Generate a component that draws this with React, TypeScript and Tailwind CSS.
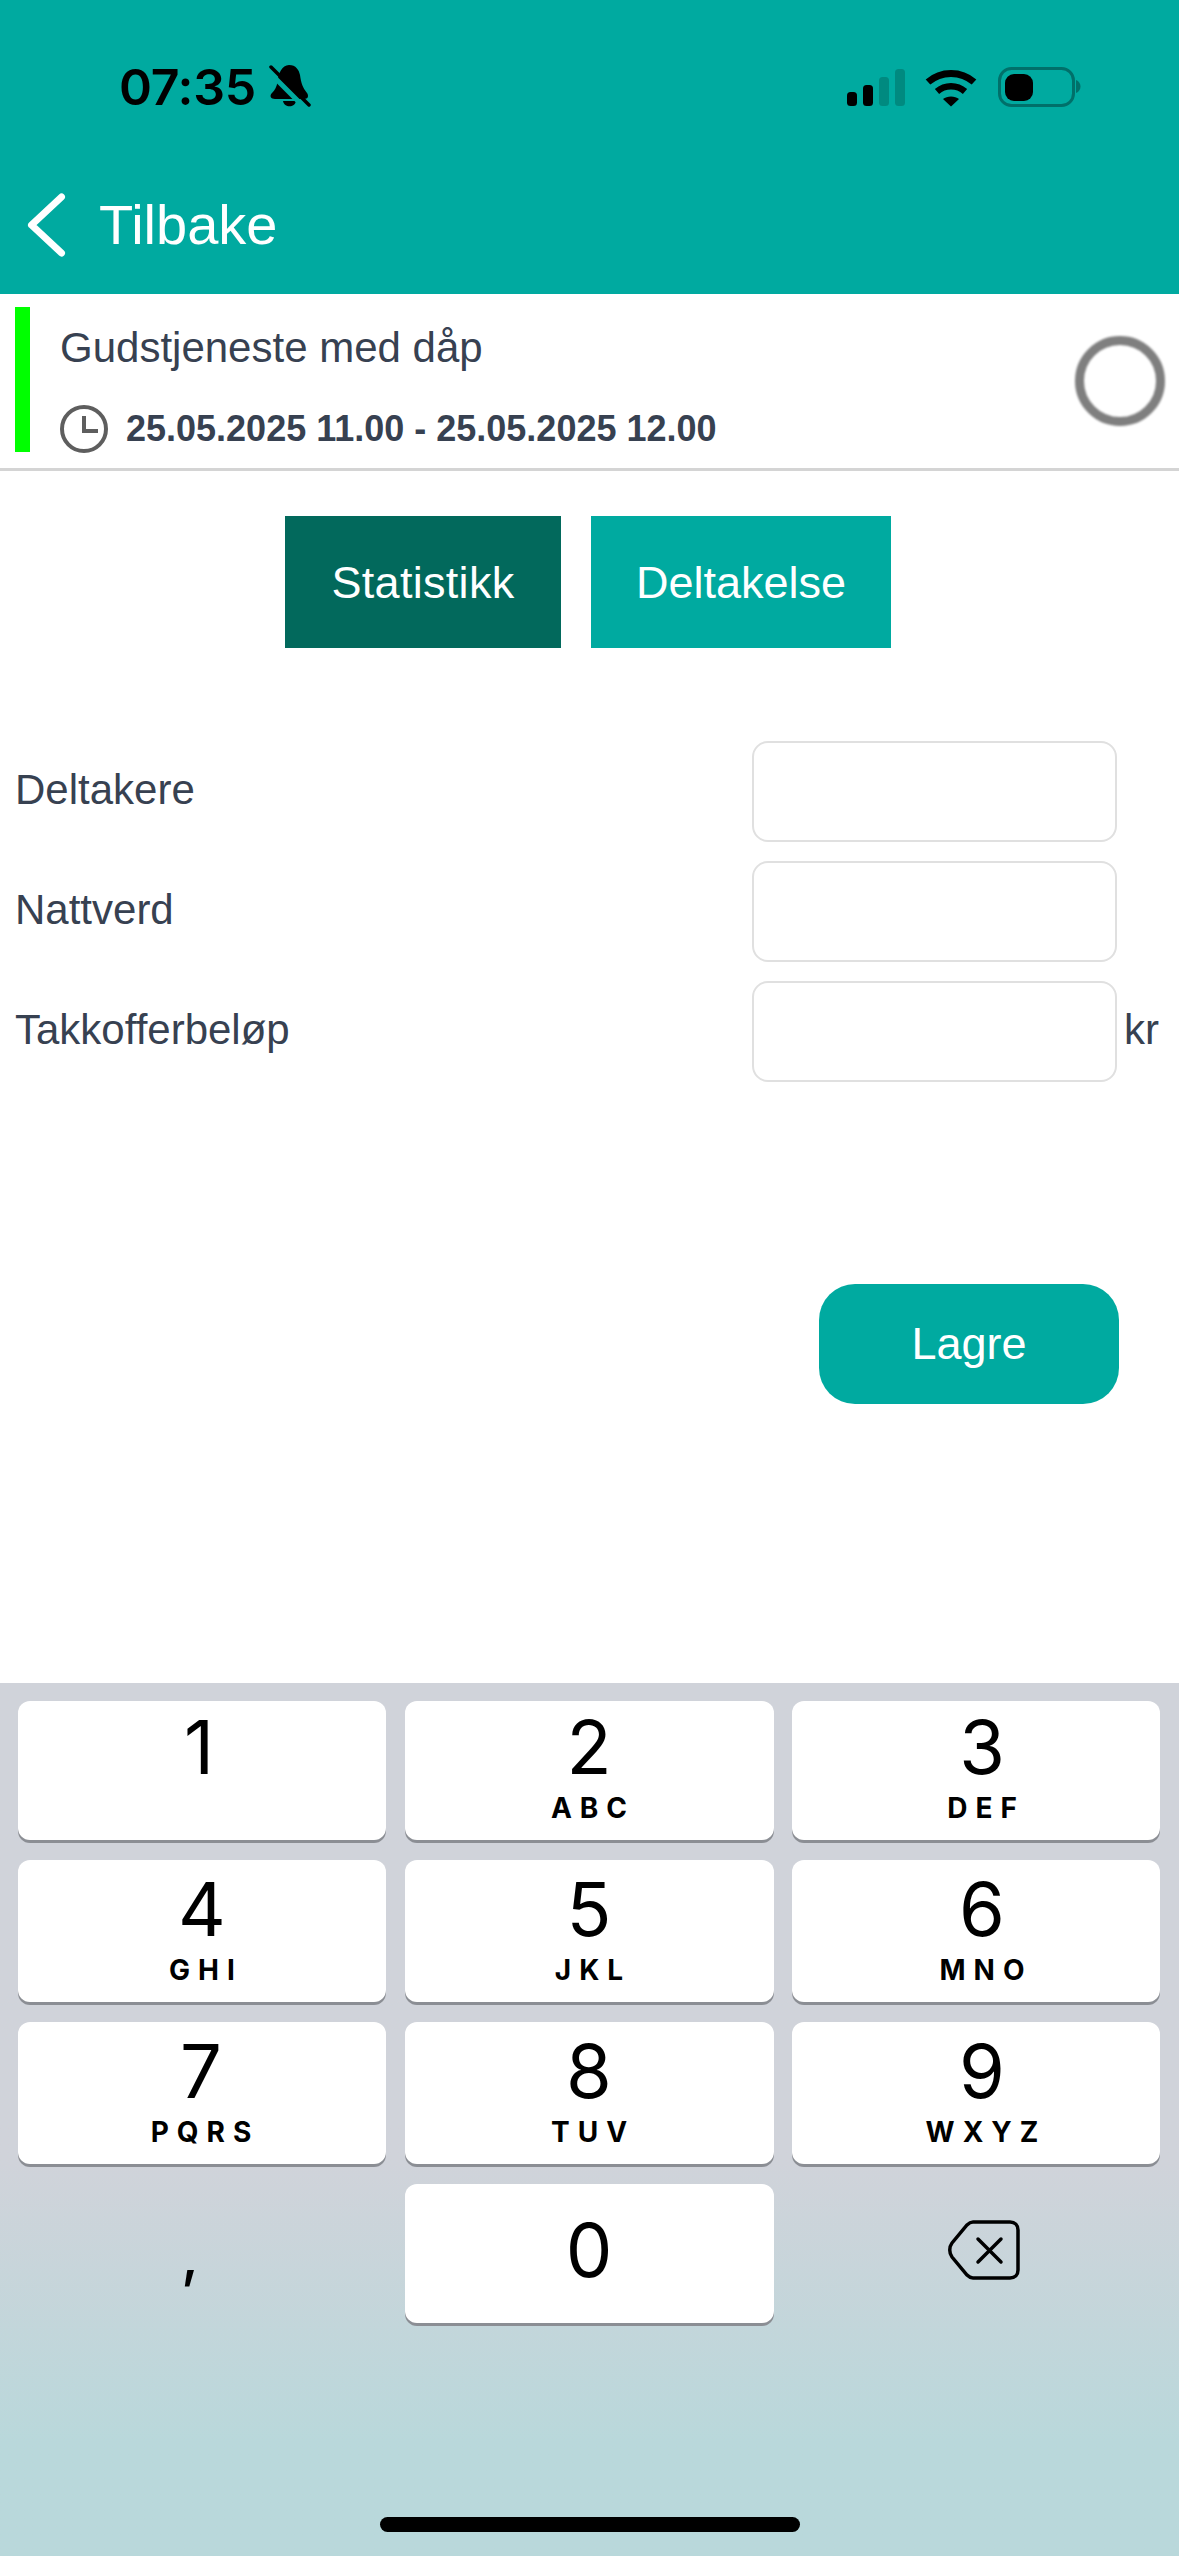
const keys = [
  { d: "1", l: "", cls: "pt-[9px] pr-[6px]" },
  { d: "2", l: "ABC", cls: "pt-[9px]" },
  { d: "3", l: "DEF", cls: "pt-[9px] pl-[12px]" },
  { d: "4", l: "GHI", cls: "pt-[12px]" },
  { d: "5", l: "JKL", cls: "pt-[12px]" },
  { d: "6", l: "MNO", cls: "pt-[12px] pl-[12px]" },
  { d: "7", l: "PQRS", cls: "pt-[12px] pr-[2px]" },
  { d: "8", l: "TUV", cls: "pt-[12px]" },
  { d: "9", l: "WXYZ", cls: "pt-[12px] pl-[12px]" },
];

function Key({ d, l, cls }: { d: string; l: string; cls: string }) {
  return (
    <div className={`flex flex-col items-center rounded-[12px] bg-white shadow-[0_3px_0_#8b8e94] ${cls}`}>
      <span className="font-['Inter',sans-serif] text-[74px] leading-none text-black">{d}</span>
      {l && (
        <span className="mt-[10px] pl-[8px] font-['Inter',sans-serif] text-[28px] leading-none font-bold tracking-[8px] text-black">
          {l}
        </span>
      )}
    </div>
  );
}

function StatusIcons() {
  return (
    <div className="mb-[3px] flex items-end">
      <svg width="60" height="40" viewBox="0 0 60 40" className="mr-[20px]">
        <rect x="2" y="23" width="10" height="14" rx="3.5" fill="#000" />
        <rect x="18" y="16" width="10" height="21" rx="3.5" fill="#000" />
        <rect x="34" y="8" width="10" height="29" rx="3.5" fill="#008a80" />
        <rect x="50" y="0" width="10" height="37" rx="3.5" fill="#008a80" />
      </svg>
      <svg width="52" height="38" viewBox="0 0 52 38" className="mr-[21px] mb-[2px]">
        <path d="M3 13 C16 1.5 36 1.5 49 13" fill="none" stroke="#000" strokeWidth="7" strokeLinecap="butt" />
        <path d="M12 22.5 C20 15.5 32 15.5 40 22.5" fill="none" stroke="#000" strokeWidth="6.5" />
        <path d="M18 30 C22 26.5 30 26.5 34 30 L26 37.5 Z" fill="#000" />
      </svg>
      <svg width="84" height="40" viewBox="0 0 84 40" className="mb-[2px]">
        <rect x="1.5" y="1.5" width="74" height="37" rx="12" fill="none" stroke="#00706a" strokeWidth="3" />
        <rect x="7" y="7" width="28" height="27" rx="9" fill="#000" />
        <path d="M78 13 C81 14 82.5 17 82.5 19.5 C82.5 22 81 25 78 26 Z" fill="#00706a" />
      </svg>
    </div>
  );
}

function BellSlash() {
  return (
    <svg width="42" height="44" viewBox="0 0 42 44" className="mb-[2px]">
      <path d="M20 1 C27 1 30 6 31 11 C32 19 34 24 38 29 C40 32 39 35 35 35 L6 35 C2 35 0 32 3 29 C6 26 7.500 23 8.500 18 C9 10 13 1 20 1 Z" fill="#000" />
      <path d="M14 37 L27 37 C26 44 15 44 14 37 Z" fill="#000" />
      <path d="M-3 5 L35 43" stroke="#00aaa0" strokeWidth="5" />
      <path d="M2 3 L40 41" stroke="#000" strokeWidth="3.500" strokeLinecap="round" />
    </svg>
  );
}

export default function App() {
  return (
    <div className="flex h-[2556px] w-[1179px] flex-col overflow-hidden bg-white font-['Liberation_Sans',Arial,sans-serif]">
      <header className="h-[294px] shrink-0 bg-[#00aaa0]">
        <div className="flex h-[112px] items-end justify-between pr-[97px] pl-[119px]">
          <div className="flex items-center gap-[13px]">
            <span className="font-['Inter',sans-serif] text-[50px] leading-[50px] font-semibold tracking-[-0.3px] text-black">
              07:35
            </span>
            <BellSlash />
          </div>
          <StatusIcons />
        </div>
        <div className="mt-[79px] flex items-center pl-[25px]">
          <svg width="43" height="68" viewBox="0 0 43 68" className="mr-[31px]">
            <path d="M36.500 6 L6.500 34 L36.500 62" fill="none" stroke="#fff" strokeWidth="7" strokeLinecap="round" strokeLinejoin="round" />
          </svg>
          <span className="text-[56px] leading-none text-white">Tilbake</span>
        </div>
      </header>

      <section className="flex h-[177px] shrink-0 items-center border-b-[3px] border-[#d4d4d4] pr-[14px] pl-[15px]">
        <div className="mb-[3px] h-[145px] w-[15px] bg-[#00ff00]" />
        <div className="ml-[30px] flex-1 pt-[18px]">
          <div className="text-[42px] leading-none text-[#374151]">Gudstjeneste med dåp</div>
          <div className="mt-[36px] flex items-center gap-[18px]">
            <svg width="48" height="48" viewBox="0 0 48 48">
              <circle cx="24" cy="24" r="22" fill="none" stroke="#5e5e5e" strokeWidth="4" />
              <path d="M24 11 L24 26 L38 26" fill="none" stroke="#5e5e5e" strokeWidth="4" />
            </svg>
            <span className="text-[36px] leading-none font-bold text-[#374151]">25.05.2025 11.00 - 25.05.2025 12.00</span>
          </div>
        </div>
        <div className="size-[90px] rounded-full border-[9px] border-[#7f7f7f] blur-[1px]" />
      </section>

      <div className="mt-[45px] flex justify-center gap-[30px] pr-[3px]">
        <div className="flex h-[132px] w-[276px] items-center justify-center bg-[#02695c] pt-[2px] text-[45px] tracking-[0.3px] text-white">Statistikk</div>
        <div className="flex h-[132px] w-[300px] items-center justify-center bg-[#00aaa0] pt-[2px] text-[45px] text-white">Deltakelse</div>
      </div>

      <div className="mt-[93px] flex flex-col gap-[19px] pl-[15px]">
        {["Deltakere", "Nattverd", "Takkofferbeløp"].map((t, i) => (
          <div key={t} className="flex h-[101px] items-center">
            <span className="w-[737px] pb-[4px] text-[42px] leading-none text-[#374151]">{t}</span>
            <div className="h-full w-[365px] rounded-[16px] border-2 border-[#e0e0e0] bg-white" />
            {i === 2 && <span className="ml-[7px] pb-[4px] text-[42px] leading-none text-[#374151]">kr</span>}
          </div>
        ))}
      </div>

      <div className="mt-[202px] flex justify-end pr-[60px]">
        <div className="flex h-[120px] w-[300px] items-center justify-center rounded-[36px] bg-[#00aaa0] text-[45px] text-white">
          Lagre
        </div>
      </div>

      <div className="mt-auto flex h-[873px] shrink-0 flex-col bg-gradient-to-b from-[#d0d3da] from-[55%] to-[#b9d8db] to-[87%] px-[18px] pt-[18px]">
        <div className="grid grid-cols-[368px_369px_368px] grid-rows-[139px_142px_142px_139px] gap-x-[18.5px] gap-y-[20px]">
          {keys.map((k) => (
            <Key key={k.d} d={k.d} l={k.l} cls={k.cls} />
          ))}
          <div className="flex justify-center pt-[42px] pr-[24px] font-['Inter',sans-serif] text-[58px] leading-none font-medium text-black">,</div>
          <Key d="0" l="" cls="pt-[29px]" />
          <div className="flex justify-center pt-[36px] pl-[15px]">
            <svg width="72" height="60" viewBox="0 0 72 60">
              <path d="M25 2 L62 2 C67 2 70 5 70 10 L70 50 C70 55 67 58 62 58 L25 58 C22.500 58 21 57 19 55 L4 37 C1 33 1 27 4 23 L19 5 C21 3 22.500 2 25 2 Z" fill="none" stroke="#000" strokeWidth="3.500" />
              <path d="M30 19 L53 42 M53 19 L30 42" fill="none" stroke="#000" strokeWidth="3.500" strokeLinecap="round" />
            </svg>
          </div>
        </div>
        <div className="mt-auto mb-[24px] h-[15px] w-[420px] self-center rounded-full bg-black" />
      </div>
    </div>
  );
}
